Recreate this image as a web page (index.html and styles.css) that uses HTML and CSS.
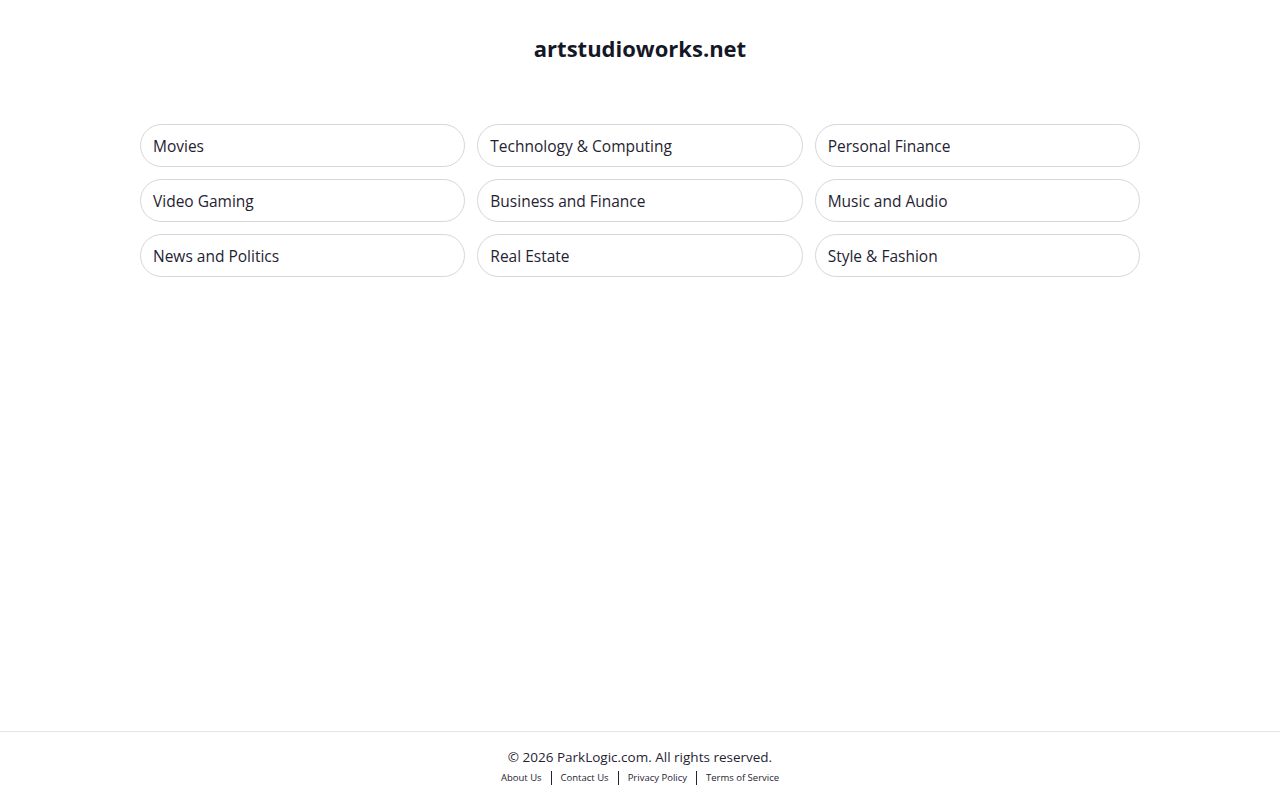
FILE: index.html
```html
<!DOCTYPE html>
<html lang="en">
<head>
  <meta charset="UTF-8">
  <title>artstudioworks.net</title>
  <link rel="stylesheet" href="styles.css">
</head>
<body>
  <div class="page">
    <header class="header">
      <h1>artstudioworks.net</h1>
    </header>

    <main class="topics">
      <a class="topic" href="#">Movies</a>
      <a class="topic" href="#">Technology &amp; Computing</a>
      <a class="topic" href="#">Personal Finance</a>
      <a class="topic" href="#">Video Gaming</a>
      <a class="topic" href="#">Business and Finance</a>
      <a class="topic" href="#">Music and Audio</a>
      <a class="topic" href="#">News and Politics</a>
      <a class="topic" href="#">Real Estate</a>
      <a class="topic" href="#">Style &amp; Fashion</a>
    </main>

    <footer class="footer">
      <p class="copy">&copy; 2026 ParkLogic.com. All rights reserved.</p>
      <nav class="links">
        <a href="#">About Us</a>
        <a href="#">Contact Us</a>
        <a href="#">Privacy Policy</a>
        <a href="#">Terms of Service</a>
      </nav>
    </footer>
  </div>
</body>
</html>
```

FILE: styles.css
```css
* {
  box-sizing: border-box;
}

body {
  margin: 0;
  font-family: "Open Sans", "Noto Sans", Arial, sans-serif;
  color: #1f2333;
  background: #fff;
}

.page {
  min-height: 100vh;
  display: flex;
  flex-direction: column;
}

.header {
  text-align: center;
  padding-top: 33px;
}

.header h1 {
  margin: 0;
  font-size: 22px;
  font-weight: 700;
  color: #141826;
}

.topics {
  width: 1000px;
  margin: 61px auto 0;
  display: grid;
  grid-template-columns: repeat(3, 1fr);
  gap: 12px;
  flex: 1;
  align-content: start;
}

.topic {
  display: block;
  height: 43px;
  line-height: 41px;
  padding: 1px 12px 0;
  border: 1px solid #d6d6d6;
  border-radius: 22px;
  font-size: 15.5px;
  color: #1f2333;
  text-decoration: none;
}

.footer {
  border-top: 1px solid #e6e6e6;
  text-align: center;
  padding: 16px 0 15px;
}

.copy {
  margin: 0;
  font-size: 13.5px;
  line-height: 19px;
}

.links {
  display: flex;
  justify-content: center;
  margin-top: 4px;
}

.links a {
  font-size: 9.5px;
  line-height: 14px;
  color: #1f2333;
  text-decoration: none;
  padding: 0 9px;
  border-left: 1.5px solid #1f2333;
}

.links a:first-child {
  border-left: none;
}
```
